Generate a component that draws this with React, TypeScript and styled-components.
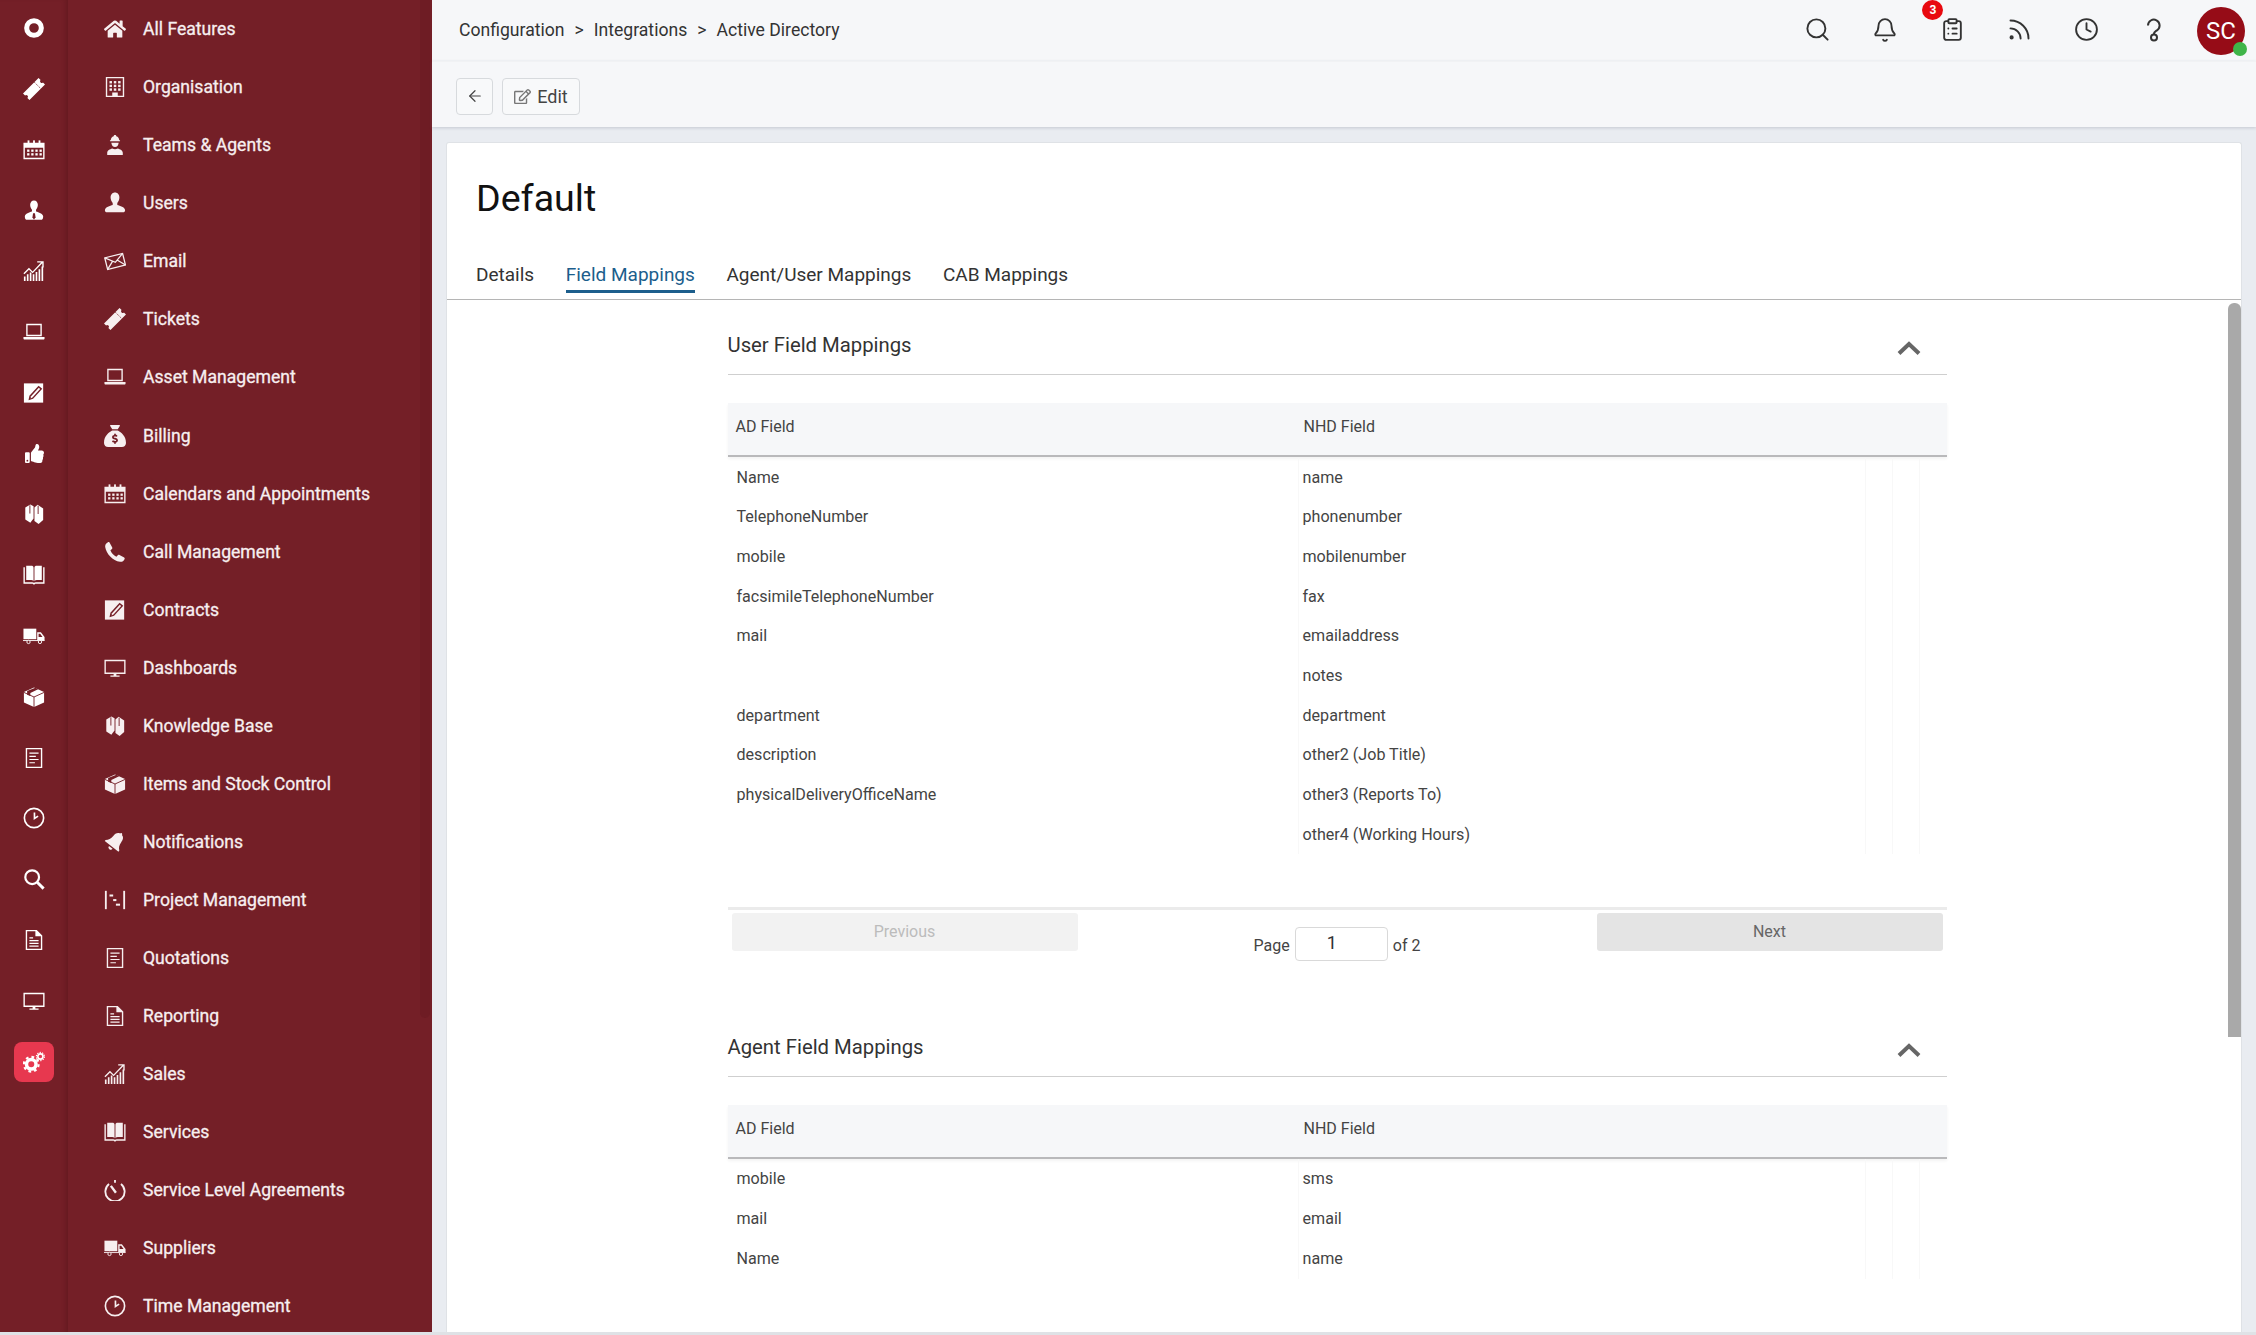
import styled, { createGlobalStyle } from 'styled-components'
import { ReactNode } from 'react'
import { ArrowLeft, Bell, ClipboardList, Clock, Rss, Search } from 'lucide-react'
import { IconType } from 'react-icons'
import { FaHome, FaRegEdit, FaThumbsUp } from 'react-icons/fa'
import { FaSackDollar } from 'react-icons/fa6'

const maroon = '#741f27'

const GlobalStyle = createGlobalStyle`
  html, body { margin: 0; padding: 0; height: 100%; overflow: hidden; }
  body { font-family: Roboto, "Liberation Sans", sans-serif; color: #333; background: #dfe2e6; }
  * { box-sizing: border-box; }
`

const Page = styled.div`
  display: flex;
  flex-direction: column;
  height: 1335px;
`

const Shell = styled.div`
  display: flex;
  height: 1332px;
  overflow: hidden;
`

const Rail = styled.nav`
  width: 68px;
  flex: none;
  background: ${maroon};
  box-shadow: inset -5px 0 5px -3px rgba(60, 10, 15, 0.28);
  display: flex;
  flex-direction: column;
  align-items: center;
  padding-top: 8px;
  gap: 20.8px;
`

const RailItem = styled.a<{ $active?: boolean }>`
  width: 40px;
  height: 40px;
  flex: none;
  display: flex;
  align-items: center;
  justify-content: center;
  color: #fff;
  border-radius: 8px;
  background: ${(p) => (p.$active ? '#e7384f' : 'transparent')};
`

const Sidebar = styled.nav`
  position: relative;
  width: 364px;
  flex: none;
  background: ${maroon};
  padding: 0.4px 0 0 36px;
  overflow: hidden;

  &::after {
    content: '';
    position: absolute;
    top: 0;
    right: 2px;
    width: 10px;
    height: 1018px;
    border-radius: 0 0 5px 5px;
    background: #6e1c24;
  }
`

const MenuRow = styled.a`
  height: 58.02px;
  display: flex;
  align-items: center;
  gap: 17px;
  color: #f7eff0;
  font-size: 17.6px;
  font-weight: 400;
  white-space: nowrap;
  -webkit-text-stroke: 0.3px #f7eff0;
`

const Main = styled.div`
  flex: 1;
  min-width: 0;
  display: flex;
  flex-direction: column;
  background: #e9ecf1;
`

const TopBar = styled.header`
  height: 61px;
  flex: none;
  background: #f6f7f9;
  display: flex;
  align-items: center;
  justify-content: space-between;
  padding: 0 11px 2px 27px;
`

const Crumbs = styled.div`
  display: flex;
  gap: 10px;
  font-size: 17.6px;
  color: #333;
`

const TopIcons = styled.div`
  display: flex;
  align-items: center;
`

const TopIcon = styled.span`
  position: relative;
  width: 67.4px;
  display: flex;
  justify-content: center;
  color: #333;
`

const Badge = styled.span`
  position: absolute;
  top: -17px;
  left: 4px;
  width: 21px;
  height: 20px;
  border-radius: 50%;
  background: #e8090f;
  color: #fff;
  font-size: 12px;
  font-weight: 700;
  line-height: 20px;
  text-align: center;
`

const Avatar = styled.span`
  position: relative;
  width: 48px;
  height: 48px;
  margin-left: 9px;
  margin-top: 3px;
  border-radius: 50%;
  background: #960c17;
  color: #fff;
  font-size: 24px;
  line-height: 48px;
  text-align: center;

  &::after {
    content: '';
    position: absolute;
    right: -2px;
    bottom: -1px;
    width: 14px;
    height: 14px;
    border-radius: 50%;
    background: #3fb549;
  }
`

const Toolbar = styled.div`
  height: 66px;
  flex: none;
  background: #f6f7f9;
  border-top: 1px solid #f1f2f4;
  box-shadow: 0 1px 3px rgba(90, 100, 120, 0.25);
  display: flex;
  align-items: center;
  gap: 9px;
  padding: 3px 0 0 24px;
  position: relative;
`

const ToolButton = styled.button<{ $square?: boolean }>`
  height: 37px;
  width: ${(p) => (p.$square ? '37px' : '78px')};
  padding: 0;
  background: #f8f9fa;
  border: 1px solid #d7dadd;
  border-radius: 4px;
  color: #444;
  font: 18px Roboto, sans-serif;
  display: flex;
  align-items: center;
  justify-content: center;
  gap: 6px;
`

const Content = styled.div`
  flex: 1;
  min-height: 0;
  display: flex;
  padding: 15px 14px 0;
`

const Card = styled.main`
  flex: 1;
  min-width: 0;
  background: #fff;
  border: 1px solid #dfe2e6;
  border-bottom: 0;
  border-radius: 3px 3px 0 0;
  display: flex;
  flex-direction: column;
`

const Title = styled.h1`
  margin: 32px 0 43px 29px;
  font-size: 37.6px;
  line-height: 46px;
  font-weight: 400;
  color: #111;
`

const Tabs = styled.div`
  display: flex;
  gap: 31.6px;
  padding: 0 0 6px 29px;
  border-bottom: 1px solid #b5b5b5;
`

const Tab = styled.a<{ $active?: boolean }>`
  font-size: 19px;
  line-height: 22px;
  padding-bottom: 4px;
  border-bottom: 3px solid ${(p) => (p.$active ? '#1c5e8c' : 'transparent')};
  color: ${(p) => (p.$active ? '#1c5e8c' : '#333')};
`

const Scroller = styled.div`
  position: relative;
  flex: 1;
  min-height: 0;
  overflow: hidden;
  padding-right: 14px;
`

const ScrollThumb = styled.div`
  position: absolute;
  top: 3px;
  right: 0;
  width: 13px;
  height: 734px;
  border-radius: 6px 6px 0 0;
  background: #a9a9a9;
`

const Section = styled.section`
  width: 1219px;
  margin: 0 auto;
  padding-top: 28px;
`

const SectionHead = styled.div`
  display: flex;
  align-items: flex-start;
  justify-content: space-between;
  height: 47px;
  padding-right: 26px;
  border-bottom: 1px solid #cfcfcf;
`

const SectionTitle = styled.h2`
  margin: 0;
  font-size: 20.3px;
  line-height: 34px;
  font-weight: 400;
  color: #333;
`

const Chevron = styled.svg`
  margin-top: 13px;
  fill: none;
  stroke: #666;
  stroke-width: 4;
`

const columns = '570px 567px 27px 27px 28px'

const TableHead = styled.div`
  display: grid;
  grid-template-columns: ${columns};
  height: 54px;
  margin-top: 28px;
  padding-top: 14px;
  background: #f6f7f9;
  border-bottom: 2px solid #b9b9bb;
  box-shadow: 0 2px 3px rgba(0, 0, 0, 0.05);
  font-size: 16px;
  line-height: 20px;
  color: #444;
`

const HeadCell = styled.div`
  padding-left: 6px;

  &:first-child {
    padding-left: 8px;
  }
`

const TableBody = styled.div`
  padding-top: 0.6px;
`

const TableRow = styled.div`
  display: grid;
  grid-template-columns: ${columns};
  height: 39.7px;
  font-size: 16.1px;
  line-height: 39.7px;
  color: #444;
`

const Cell = styled.div`
  padding-left: 4px;
  border-left: 1px solid #f8f8f8;
  white-space: nowrap;

  &:first-child {
    padding-left: 9px;
    border-left: 0;
  }
`

const Pagination = styled.div`
  display: flex;
  justify-content: space-between;
  margin-top: 52.4px;
  padding: 3px 4px 41px;
  border-top: 3px solid #ebebeb;
`

const PageButton = styled.button<{ $disabled?: boolean }>`
  width: 346px;
  height: 38px;
  border: 0;
  border-radius: 3px;
  background: ${(p) => (p.$disabled ? '#f2f2f2' : '#e4e4e4')};
  color: ${(p) => (p.$disabled ? '#bcbcbc' : '#666')};
  font: 16px Roboto, sans-serif;
`

const PageInfo = styled.div`
  display: flex;
  align-items: center;
  gap: 5px;
  height: 34px;
  margin-top: 14px;
  font-size: 16px;
  color: #444;
`

const PageLabel = styled.span`
  padding-top: 3px;
`

const PageInput = styled.div`
  width: 93px;
  height: 34px;
  padding-left: 31px;
  border: 1px solid #d9d9d9;
  border-radius: 4px;
  font-size: 18px;
  line-height: 30px;
  color: #333;
`

const BottomStrip = styled.div`
  height: 3px;
  flex: none;
  background: #dfe2e6;
`

const G = styled.svg`
  flex: none;
  fill: currentColor;
`

const packaged: Record<string, IconType> = {
  home: FaHome,
  sack: FaSackDollar,
  thumb: FaThumbsUp,
}

const drawings: Record<string, ReactNode> = {
  ring: <circle cx="12" cy="12" r="8" fill="none" stroke="currentColor" strokeWidth="5.5" />,
  ticket: (
    <g transform="rotate(-45 12 12)">
      <path d="M0 7h24v3.200a1.800 1.800 0 0 0 0 3.600V17H0v-3.200a1.800 1.800 0 0 0 0-3.600z" />
      <path d="M17.500 7v10" stroke={maroon} strokeWidth="0.8" strokeDasharray="1.500 1" />
    </g>
  ),
  building: (
    <>
      <path fillRule="evenodd" d="M2 1h20v22H2z M3.500 2.500v19h5.500v-3.500h6v3.500h5.500v-19z" />
      {[5.5, 9.5, 13.5].map((y) =>
        [6, 10.7, 15.4].map((x) => <rect key={`${x}-${y}`} x={x} y={y} width="2.700" height="2.600" />)
      )}
    </>
  ),
  hardhat: (
    <>
      <path d="M12 1c-1 0-1.300.6-1.400 1.400-2 .6-3.200 2.300-3.200 4.300H6.500V8h11V6.700h-.9c0-2-1.200-3.700-3.200-4.300C13.300 1.600 13 1 12 1z" />
      <path d="M8 9.500c.3 2.800 1.800 4.800 4 4.800s3.700-2 4-4.800z" />
      <path d="M3.500 23v-2.500c0-2.500 3-3.800 5.500-4.600 1.800 1.100 4.200 1.100 6 0 2.500.8 5.500 2.100 5.500 4.600V23z" />
    </>
  ),
  user: (
    <path d="M12 0.500C9 0.500 7.200 3 7.200 6c0 2.400 1 4.600 2.300 5.900v2.200c-3 1-8 2-8.500 5.500-.1 1.200.6 2.400 1.500 2.400h19c.9 0 1.600-1.200 1.500-2.400-.5-3.500-5.500-4.500-8.500-5.500v-2.200c1.300-1.300 2.300-3.500 2.300-5.900C16.800 3 15 0.500 12 0.500z" />
  ),
  usertie: (
    <>
      <path d="M12 1.500c-2.600 0-4.200 2.200-4.200 4.800 0 2.200.9 4.200 2 5.400v1.800c-3 1-7.300 2-7.800 5.300C1.900 20.200 2.500 22.500 3.500 22.500h17c1 0 1.600-2.300 1.500-3.700-.5-3.300-4.800-4.300-7.800-5.300v-1.800c1.100-1.200 2-3.200 2-5.400 0-2.600-1.600-4.800-4.200-4.800z" />
      <path d="M11 15.500h2l.7 4.500-1.700 2.500-1.700-2.500z" fill={maroon} />
    </>
  ),
  envelope: (
    <g transform="rotate(-14 12 12)" fill="none" stroke="currentColor" strokeWidth="1.400">
      <rect x="2" y="6" width="20" height="13" />
      <path d="M2 6l10 7.500L22 6M2 19l7.500-7.500M22 19l-7.500-7.500" />
    </g>
  ),
  laptop: (
    <>
      <path fillRule="evenodd" d="M3.500 3h17v13.500h-17z M5 4.500v10.500h14V4.500z" />
      <path d="M0.500 17.500h23v1.500c0 .7-.5 1.300-1.200 1.300H1.700C1 20.300.5 19.700.5 19z" />
    </>
  ),
  calendar: (
    <>
      <path fillRule="evenodd" d="M0.500 4h23v18h-23z M2 9.500v11h20v-11z" />
      {[5, 11, 17].map((x) => <rect key={x} x={x} y="1.500" width="2" height="4.500" />)}
      {[11.5, 15.5].map((y) =>
        [4.5, 9, 13.5, 18].map((x) => <rect key={`${x}-${y}`} x={x} y={y} width="2.500" height="2.500" />)
      )}
    </>
  ),
  phone: (
    <path d="M6 1.500 9 7c.3.6.1 1.200-.3 1.600L7 10.200c1 3 3.500 5.800 6.500 7l1.800-1.800c.4-.4 1-.5 1.600-.2l5.100 2.800c.6.400.8 1 .5 1.600-1 2.400-3 3.400-5 3.100C9.500 21.500 2.500 14 1.300 6.500 1 4.500 2 2.500 4.300 1.300 4.900 1 5.600 1 6 1.500z" />
  ),
  pencil: (
    <>
      <path d="M1 1.500h21v21H1z" />
      <path d="M6 20l1-5 10-11 4 3.400-10 11z" fill={maroon} />
      <path d="M8.300 18l.5-2.500 8.400-9.200 1.500 1.300-8.400 9.200z" />
    </>
  ),
  monitor: (
    <>
      <path fillRule="evenodd" d="M0.500 3h23v15.500h-23z M2 4.500V17h20V4.500z" />
      <path d="M10.500 18.500h3v1.700h-3zM7 20.200h10v1.300H7z" />
    </>
  ),
  books: (
    <>
      <path d="M2.500 5 8 1.500 11.500 3.500V17L8 21.500 2.500 18z" />
      <path d="M12.500 5 16 2 22 6V18.500L17 23 12.500 19.500z" />
      <path d="M7.500 2.500v9M16.500 3v9" stroke={maroon} strokeWidth="1" />
    </>
  ),
  box: (
    <>
      <path d="M12 1.500 23 6.500V18L12 23 1 18V6.500z" />
      <path d="M1 7 12 12l11-5M12 12v11" fill="none" stroke={maroon} strokeWidth="1" />
      <path d="M4.500 9.500V5.500L13.500 2 16.500 3.500 8 7.500V11z" fill={maroon} />
    </>
  ),
  bell: (
    <g transform="rotate(38 12 12)">
      <path d="M12 0c-.8 0-1.300.6-1.300 1.300C7.500 2 6.500 5 6.500 8c0 4-1.500 6.500-4 8.500V18h19v-1.500c-2.500-2-4-4.500-4-8.500 0-3-1-6-4.200-6.700C13.300.6 12.800 0 12 0zM9.500 19.500a2.500 2.500 0 0 0 5 0z" />
    </g>
  ),
  gantt: (
    <>
      <rect x="1" y="2" width="2" height="20" />
      <rect x="21" y="2" width="2" height="20" />
      <rect x="6" y="6" width="4" height="2.200" />
      <rect x="10" y="11" width="3.500" height="2.200" />
      <rect x="13" y="16" width="4.500" height="2.200" />
    </>
  ),
  doclines: (
    <>
      <path fillRule="evenodd" d="M3 1h18v22H3z M4.500 2.500v19h15v-19z" />
      <path d="M7 6h10v1.300H7zM7 9.500h7v1.300H7zM7 13h10v1.300H7zM7 16.500h6v1.300H7z" />
    </>
  ),
  docfold: (
    <>
      <path fillRule="evenodd" d="M3 1h12l6 6v16H3z M4.500 2.500v19h15V8h-6V2.500z" />
      <path d="M7 9h4v1.300H7zM7 12h10v1.300H7zM7 15h10v1.300H7zM7 18h10v1.300H7z" />
    </>
  ),
  chart: (
    <>
      <path d="M1 18h1.800v5H1zM4.200 15.500H6V23H4.200zM7.400 13.500h1.800V23H7.400zM10.600 15.500h1.800V23h-1.800zM13.800 13h1.800v10h-1.800zM17 10h1.800v13H17zM20.200 7H22v16h-1.800z" />
      <path d="M1 15l5.500-5.500 4 4L21 2.500M15.500 2h6.300v6.300" fill="none" stroke="currentColor" strokeWidth="1.500" />
    </>
  ),
  openbook: (
    <>
      <path d="M0.500 3.500v18h9.300c1 0 1.700.5 2.200 1.500.5-1 1.200-1.500 2.200-1.500h9.300v-18H22v16.300h-8c-.8 0-1.500.2-2 .6-.5-.4-1.200-.6-2-.6H2V3.500z" />
      <path d="M3.500 2h5.500c1.500 0 2.500.7 2.500 2v14.500c-.7-.7-1.500-1-2.500-1H3.500zM20.500 2H15c-1.500 0-2.500.7-2.500 2v14.500c.7-.7 1.500-1 2.500-1h5.500z" />
    </>
  ),
  stopwatch: (
    <g fill="none" stroke="currentColor">
      <path d="M5.500 5.500a10.500 10.500 0 1 0 13 0" strokeWidth="2" />
      <path d="M12 1v3" strokeWidth="2" />
      <path d="M13 15 7.500 7.500" strokeWidth="2.600" />
    </g>
  ),
  truck: (
    <>
      <path d="M0.500 4h14v11.500H0.500z" />
      <path fillRule="evenodd" d="M15.500 8h4l4 5v4h-8z M17 9.500V13h4.300l-2.600-3.500z" />
      <path d="M0 16.500h23.500v1H0z" />
      <circle cx="6" cy="18.500" r="1.800" fill={maroon} stroke="currentColor" strokeWidth="1" />
      <circle cx="18.500" cy="18.500" r="1.800" fill={maroon} stroke="currentColor" strokeWidth="1" />
    </>
  ),
  clock: (
    <g fill="none" stroke="currentColor" strokeWidth="1.800">
      <circle cx="12" cy="12" r="10.500" />
      <path d="M12.500 6v6.500l4-2.500" />
    </g>
  ),
  search: (
    <g fill="none" stroke="currentColor">
      <circle cx="10" cy="10" r="7.500" strokeWidth="2.400" />
      <path d="M15.500 15.500 22.500 22.500" strokeWidth="3.200" />
    </g>
  ),
  gears: (
    <g fill="none" stroke="currentColor">
      <circle cx="9" cy="14.500" r="5.200" strokeWidth="3.800" />
      <circle cx="9" cy="14.500" r="8" strokeWidth="2.400" strokeDasharray="3 3.280" />
      <circle cx="19" cy="6" r="2.800" strokeWidth="1.800" />
      <circle cx="19" cy="6" r="4.400" strokeWidth="1.300" strokeDasharray="1.400 1.360" />
    </g>
  ),
}

function Glyph({ name, size = 22 }: { name: string; size?: number }) {
  const Packaged = packaged[name]
  if (Packaged) return <Packaged size={size} style={{ flex: 'none' }} />
  return (
    <G width={size} height={size} viewBox="0 0 24 24">
      {drawings[name]}
    </G>
  )
}

const railIcons = [
  'ring', 'ticket', 'calendar', 'usertie', 'chart', 'laptop', 'pencil', 'thumb',
  'books', 'openbook', 'truck', 'box', 'doclines', 'clock', 'search', 'docfold', 'monitor',
]

const menu = [
  ['home', 'All Features'],
  ['building', 'Organisation'],
  ['hardhat', 'Teams & Agents'],
  ['user', 'Users'],
  ['envelope', 'Email'],
  ['ticket', 'Tickets'],
  ['laptop', 'Asset Management'],
  ['sack', 'Billing'],
  ['calendar', 'Calendars and Appointments'],
  ['phone', 'Call Management'],
  ['pencil', 'Contracts'],
  ['monitor', 'Dashboards'],
  ['books', 'Knowledge Base'],
  ['box', 'Items and Stock Control'],
  ['bell', 'Notifications'],
  ['gantt', 'Project Management'],
  ['doclines', 'Quotations'],
  ['docfold', 'Reporting'],
  ['chart', 'Sales'],
  ['openbook', 'Services'],
  ['stopwatch', 'Service Level Agreements'],
  ['truck', 'Suppliers'],
  ['clock', 'Time Management'],
]

const userRows = [
  ['Name', 'name'],
  ['TelephoneNumber', 'phonenumber'],
  ['mobile', 'mobilenumber'],
  ['facsimileTelephoneNumber', 'fax'],
  ['mail', 'emailaddress'],
  ['', 'notes'],
  ['department', 'department'],
  ['description', 'other2 (Job Title)'],
  ['physicalDeliveryOfficeName', 'other3 (Reports To)'],
  ['', 'other4 (Working Hours)'],
]

const agentRows = [
  ['mobile', 'sms'],
  ['mail', 'email'],
  ['Name', 'name'],
]

function MappingTable({ rows }: { rows: string[][] }) {
  return (
    <>
      <TableHead>
        <HeadCell>AD Field</HeadCell>
        <HeadCell>NHD Field</HeadCell>
      </TableHead>
      <TableBody>
        {rows.map((r, i) => (
          <TableRow key={i}>
            <Cell>{r[0]}</Cell>
            <Cell>{r[1]}</Cell>
            <Cell />
            <Cell />
            <Cell />
          </TableRow>
        ))}
      </TableBody>
    </>
  )
}

function Head({ title }: { title: string }) {
  return (
    <SectionHead>
      <SectionTitle>{title}</SectionTitle>
      <Chevron width="24" height="14" viewBox="0 0 24 14">
        <path d="M2 12.500 12 3l10 9.500" />
      </Chevron>
    </SectionHead>
  )
}

export default function App() {
  return (
    <Page>
      <GlobalStyle />
      <Shell>
        <Rail>
          {railIcons.map((name) => (
            <RailItem key={name}>
              <Glyph name={name} size={name === 'thumb' ? 19 : 22} />
            </RailItem>
          ))}
          <RailItem $active>
            <Glyph name="gears" />
          </RailItem>
        </Rail>
        <Sidebar>
          {menu.map(([icon, label]) => (
            <MenuRow key={label}>
              <Glyph name={icon} />
              {label}
            </MenuRow>
          ))}
        </Sidebar>
        <Main>
          <TopBar>
            <Crumbs>
              <span>Configuration</span>
              <span>&gt;</span>
              <span>Integrations</span>
              <span>&gt;</span>
              <span>Active Directory</span>
            </Crumbs>
            <TopIcons>
              <TopIcon><Search size={27} strokeWidth={1.7} /></TopIcon>
              <TopIcon><Bell size={26} strokeWidth={1.7} /></TopIcon>
              <TopIcon>
                <Badge>3</Badge>
                <ClipboardList size={25} strokeWidth={1.8} />
              </TopIcon>
              <TopIcon><Rss size={27} strokeWidth={1.7} /></TopIcon>
              <TopIcon><Clock size={25} strokeWidth={1.8} /></TopIcon>
              <TopIcon>
                <svg width="24" height="24" viewBox="0 0 24 24" fill="none" stroke="currentColor" strokeWidth="2">
                  <path d="M6 7.500a5.800 5.800 0 1 1 9 4.800c-2 1.300-3.200 1.500-3.200 4" />
                  <circle cx="12" cy="19.500" r="3" />
                </svg>
              </TopIcon>
              <Avatar>SC</Avatar>
            </TopIcons>
          </TopBar>
          <Toolbar>
            <ToolButton $square><ArrowLeft size={18} strokeWidth={1.6} /></ToolButton>
            <ToolButton><FaRegEdit size={17} color="#777" />Edit</ToolButton>
          </Toolbar>
          <Content>
            <Card>
              <Title>Default</Title>
              <Tabs>
                <Tab>Details</Tab>
                <Tab $active>Field Mappings</Tab>
                <Tab>Agent/User Mappings</Tab>
                <Tab>CAB Mappings</Tab>
              </Tabs>
              <Scroller>
                <ScrollThumb />
                <Section>
                  <Head title="User Field Mappings" />
                  <MappingTable rows={userRows} />
                  <Pagination>
                    <PageButton $disabled>Previous</PageButton>
                    <PageInfo>
                      <PageLabel>Page</PageLabel>
                      <PageInput>1</PageInput>
                      <PageLabel>of 2</PageLabel>
                    </PageInfo>
                    <PageButton>Next</PageButton>
                  </Pagination>
                </Section>
                <Section>
                  <Head title="Agent Field Mappings" />
                  <MappingTable rows={agentRows} />
                </Section>
              </Scroller>
            </Card>
          </Content>
        </Main>
      </Shell>
      <BottomStrip />
    </Page>
  )
}
